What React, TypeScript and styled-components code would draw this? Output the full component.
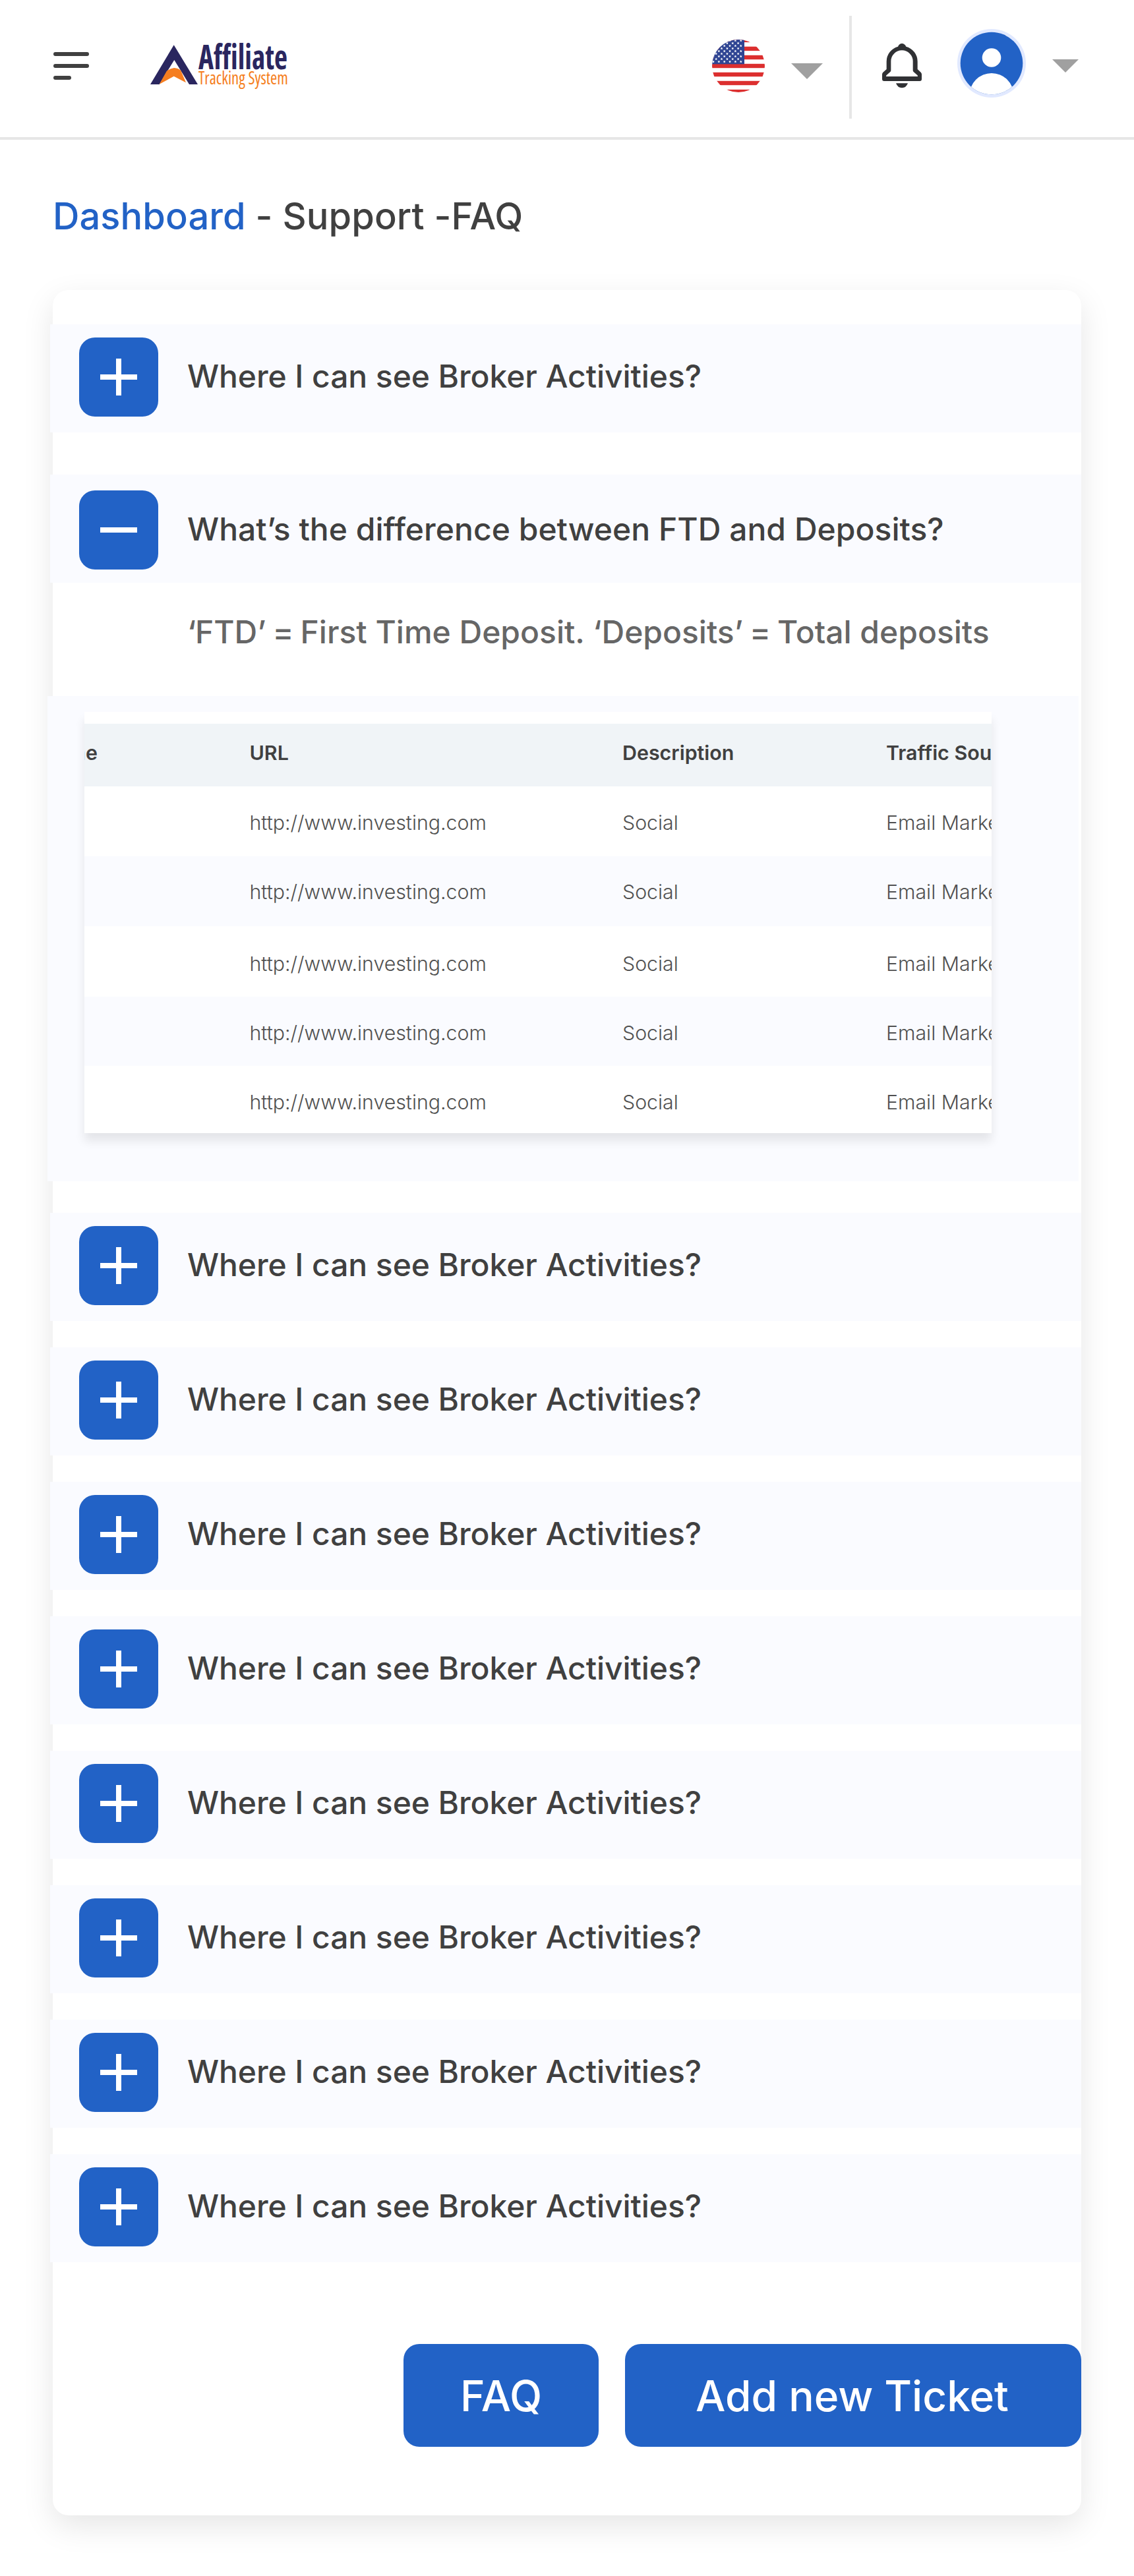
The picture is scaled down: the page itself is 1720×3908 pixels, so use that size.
import React, { useState } from "react";
import styled, { createGlobalStyle } from "styled-components";

const blue = "#2262c6";
const ink = "#404040";
const tint = "#fafbff";

const GlobalStyle = createGlobalStyle`
  *, *::before, *::after { box-sizing: border-box; }
  body {
    margin: 0;
    background: #fff;
    color: ${ink};
    font-family: Inter, "Liberation Sans", sans-serif;
    font-weight: 500;
  }
  button { font: inherit; border: 0; padding: 0; cursor: pointer; }
  svg { display: block; }
`;

const Page = styled.div`
  width: 1720px;
  min-height: 3908px;
  overflow: hidden;
`;

const TopBar = styled.header`
  display: flex;
  align-items: center;
  justify-content: space-between;
  height: 212px;
  padding: 0 84px 8px 81px;
  border-bottom: 4px solid #e6e6e6;
`;

const Brand = styled.div`
  display: flex;
  align-items: center;
  gap: 93px;
`;

const MenuButton = styled.button`
  display: flex;
  flex-direction: column;
  gap: 12px;
  width: 54px;
  background: none;
`;

const MenuLine = styled.span<{ $short?: boolean }>`
  width: ${(p) => (p.$short ? 27 : 54)}px;
  height: 6px;
  border-radius: 3px;
  background: ${ink};
`;

const LogoSlot = styled.div`
  padding-top: 6px;
`;

const LogoDrawing = styled.svg`
  overflow: visible;
`;

const LogoText = styled.text`
  font-family: "Open Sans", "Noto Sans", sans-serif;
  font-stretch: 75%;
  font-variant-ligatures: none;
`;

const Tools = styled.div`
  display: flex;
  align-items: center;
`;

const Language = styled.div`
  display: flex;
  align-items: center;
  gap: 40px;
`;

const Caret = styled.span<{ $size: number; $drop?: number }>`
  width: ${(p) => p.$size * 2}px;
  height: ${(p) => p.$size}px;
  margin-top: ${(p) => p.$drop ?? 0}px;
  background: #a0a0a0;
  clip-path: polygon(0 0, 100% 0, 50% 100%);
`;

const Divider = styled.span`
  width: 4px;
  height: 156px;
  margin: 4px 46px 0 40px;
  background: #e6e6e6;
`;

const Account = styled.div`
  display: flex;
  align-items: center;
  gap: 40px;
  margin-left: 54px;
`;

const AvatarSlot = styled.div`
  margin-bottom: 8px;
`;

const Breadcrumb = styled.nav`
  height: 228px;
  padding: 82px 80px 0;
  font-size: 56px;
  line-height: 69px;
  letter-spacing: 0.06px;
  white-space: pre;
`;

const Crumb = styled.span`
  color: ${blue};
`;

const Card = styled.main`
  display: flex;
  flex-direction: column;
  width: 1560px;
  margin: 0 80px;
  padding: 52px 0 104px;
  border-radius: 24px;
  background: #fff;
  box-shadow: 0 16px 48px rgba(0, 0, 0, 0.1);
`;

const Question = styled.section<{ $gap: number }>`
  margin-bottom: ${(p) => p.$gap}px;
`;

const QuestionBar = styled.div<{ $inset: number }>`
  display: flex;
  align-items: flex-start;
  gap: 44px;
  height: 164px;
  margin-left: -4px;
  padding: ${(p) => p.$inset}px 0 0 44px;
  background: ${tint};
`;

const Toggle = styled.button`
  display: flex;
  align-items: center;
  justify-content: center;
  width: 120px;
  height: 120px;
  border-radius: 24px;
  background: ${blue};
`;

const QuestionText = styled.h2<{ $tracking: number }>`
  margin: 0;
  font-size: 48px;
  font-weight: 500;
  line-height: 117px;
  letter-spacing: ${(p) => p.$tracking}px;
  white-space: nowrap;
`;

const Answer = styled.p`
  height: 172px;
  margin: 0;
  padding-left: 204px;
  color: #666;
  font-size: 48px;
  line-height: 149px;
  white-space: nowrap;
`;

const Tight = styled.span`
  letter-spacing: -1.4px;
`;

const Preview = styled.div`
  width: 1564px;
  height: 736px;
  margin-left: -8px;
  padding: 24px 0 0 56px;
  background: ${tint};
`;

const PreviewShadow = styled.div`
  width: 1376px;
  height: 639px;
  box-shadow: 0 12px 14px rgba(0, 0, 0, 0.09);
`;

const PreviewWindow = styled.div`
  height: 639px;
  padding-top: 18px;
  overflow: hidden;
  background: #fff;
`;

const SiteTable = styled.div`
  width: 1700px;
  margin-left: -66px;
`;

const TableRow = styled.div<{ $height: number; $line: number; $head?: boolean; $shaded?: boolean }>`
  display: grid;
  grid-template-columns: 316.5px 565.5px 400px 418px;
  height: ${(p) => p.$height}px;
  line-height: ${(p) => p.$line}px;
  font-size: ${(p) => (p.$head ? 30.4 : 30.3)}px;
  font-weight: ${(p) => (p.$head ? 600 : 300)};
  color: ${(p) => (p.$head ? ink : "#505050")};
  background: ${(p) => (p.$head ? "#f0f4f7" : p.$shaded ? tint : "#fff")};
  white-space: nowrap;
`;

const Actions = styled.div`
  display: flex;
  justify-content: flex-end;
  gap: 40px;
  margin-top: 84px;
`;

const ActionButton = styled.button<{ $width: number; $nudge?: number }>`
  width: ${(p) => p.$width}px;
  height: 156px;
  padding-right: ${(p) => p.$nudge ?? 0}px;
  border-radius: 24px;
  background: ${blue};
  color: #fff;
  font-size: 64px;
  line-height: 157px;
`;

const Logo = () => (
  <LogoDrawing width="210" height="70" viewBox="0 0 210 70">
    <path d="M35.7 .3 72 60H59L36.3 23 13.7 60H0Z" fill="#2a265f" />
    <path d="M13.7 59.7 24.7 40Q29 36 36 35Q43 35.500 46.300 39L54 57.300 35.700 47.700Z" fill="#f57e20" />
    <LogoText x="73" y="36.500" fontWeight="700" fontSize="51" textLength="135" lengthAdjust="spacingAndGlyphs" fill="#2a265f">Affiliate</LogoText>
    <LogoText x="73" y="60" fontWeight="500" fontSize="27" textLength="136" lengthAdjust="spacingAndGlyphs" fill="#f57e20">Tracking System</LogoText>
  </LogoDrawing>
);

const starPath = (cx: number, cy: number) =>
  Array.from({ length: 10 }, (_, i) => {
    const r = i % 2 ? 0.95 : 2.1;
    const a = (Math.PI * i) / 5 - Math.PI / 2;
    return `${(cx + r * Math.cos(a)).toFixed(2)},${(cy + r * Math.sin(a)).toFixed(2)}`;
  }).join(" ");

const Flag = () => (
  <svg width="80" height="80" viewBox="0 0 80 80">
    <defs>
      <clipPath id="flag-round"><circle cx="40" cy="40" r="40" /></clipPath>
    </defs>
    <g clipPath="url(#flag-round)">
      <rect width="80" height="80" fill="#fff" />
      {[-2.3, 10.7, 23.8, 36.8, 49.8, 62.8, 75.9].map((y) => (
        <rect key={y} y={y} width="80" height="6.4" fill="#dc2f2f" />
      ))}
      <rect width="49" height="37.300" fill="#2f4593" />
      {Array.from({ length: 9 }, (_, row) =>
        Array.from({ length: row % 2 ? 5 : 6 }, (_, col) => (
          <polygon key={`${row}-${col}`} points={starPath((row % 2 ? 6.2 : 2) + col * 8.35, 1.5 + row * 4)} fill="#fff" />
        ))
      )}
    </g>
  </svg>
);

const Bell = () => (
  <svg width="60" height="68" viewBox="0 0 180 204">
    <path
      fill="#303134"
      fillRule="evenodd"
      d="M72 14Q78 0 90 0T109 14A70.500 70.500 0 0 1 161 82V117L176 131Q180 135 180 140V162Q180 171 171 171H9Q0 171 0 162V140Q0 135 4 131L20 117V82A70.500 70.500 0 0 1 72 14ZM40 81V122Q40 126 37 129L20 144Q18 146 18 150H162Q162 146 160 144L143 129Q140 126 140 122V81A50 50 0 0 0 40 81Z"
    />
    <path fill="#303134" d="M63 181H117Q109 202 90 202T63 181Z" />
  </svg>
);

const Avatar = () => (
  <svg width="104" height="104" viewBox="0 0 104 104">
    <defs>
      <clipPath id="avatar-round"><circle cx="52" cy="52" r="47.300" /></clipPath>
    </defs>
    <circle cx="52" cy="52" r="52" fill="#e1e9ff" />
    <g clipPath="url(#avatar-round)">
      <rect width="104" height="104" fill={blue} />
      <circle cx="52" cy="43.500" r="14.300" fill="#fff" />
      <circle cx="52" cy="100.500" r="33.500" fill="#fff" />
    </g>
  </svg>
);

const Sign = ({ open }: { open: boolean }) => (
  <svg width="56" height="56" viewBox="0 0 56 56">
    <path d={open ? "M0 28H56" : "M0 28H56M28 0V56"} stroke="#fff" strokeWidth="8" />
  </svg>
);

const siteRows = [
  { height: 106, line: 110 },
  { height: 106, line: 109 },
  { height: 107, line: 114 },
  { height: 105, line: 110 },
  { height: 101, line: 110 },
];

const SitePreview = () => (
  <Preview>
    <PreviewShadow>
      <PreviewWindow>
        <SiteTable>
          <TableRow $height={95} $line={88} $head>
            <span>Name</span>
            <span>URL</span>
            <span>Description</span>
            <span>Traffic Source</span>
          </TableRow>
          {siteRows.map((row, i) => (
            <TableRow key={i} $height={row.height} $line={row.line} $shaded={i % 2 === 1}>
              <span />
              <span>http://www.investing.com</span>
              <span>Social</span>
              <span>Email Marketing</span>
            </TableRow>
          ))}
        </SiteTable>
      </PreviewWindow>
    </PreviewShadow>
  </Preview>
);

const broker = "Where I can see Broker Activities?";
const questions = [
  { text: broker, inset: 20, gap: 64, tracking: -0.08 },
  { text: "What’s the difference between FTD and Deposits?", inset: 24, gap: 48, tracking: 0.03 },
  ...Array.from({ length: 8 }, () => ({ text: broker, inset: 20, gap: 40, tracking: -0.08 })),
];

export default function App() {
  const [openIndex, setOpenIndex] = useState(1);
  return (
    <Page>
      <GlobalStyle />
      <TopBar>
        <Brand>
          <MenuButton aria-label="Menu">
            <MenuLine />
            <MenuLine />
            <MenuLine $short />
          </MenuButton>
          <LogoSlot><Logo /></LogoSlot>
        </Brand>
        <Tools>
          <Language>
            <Flag />
            <Caret $size={24} $drop={16} />
          </Language>
          <Divider />
          <Bell />
          <Account>
            <AvatarSlot><Avatar /></AvatarSlot>
            <Caret $size={20} />
          </Account>
        </Tools>
      </TopBar>
      <Breadcrumb>
        <Crumb>Dashboard</Crumb> - Support -FAQ
      </Breadcrumb>
      <Card>
        {questions.map((q, i) => (
          <Question key={i} $gap={q.gap}>
            <QuestionBar $inset={q.inset}>
              <Toggle aria-expanded={i === openIndex} onClick={() => setOpenIndex(i === openIndex ? -1 : i)}>
                <Sign open={i === openIndex} />
              </Toggle>
              <QuestionText $tracking={q.tracking}>{q.text}</QuestionText>
            </QuestionBar>
            {i === openIndex && (
              <>
                <Answer>
                  <Tight>‘</Tight>FTD<Tight>’ = </Tight>First Time Deposit. ‘Deposits<Tight>’ = </Tight>Total deposits
                </Answer>
                <SitePreview />
              </>
            )}
          </Question>
        ))}
        <Actions>
          <ActionButton $width={296}>FAQ</ActionButton>
          <ActionButton $width={692} $nudge={3}>Add new Ticket</ActionButton>
        </Actions>
      </Card>
    </Page>
  );
}
